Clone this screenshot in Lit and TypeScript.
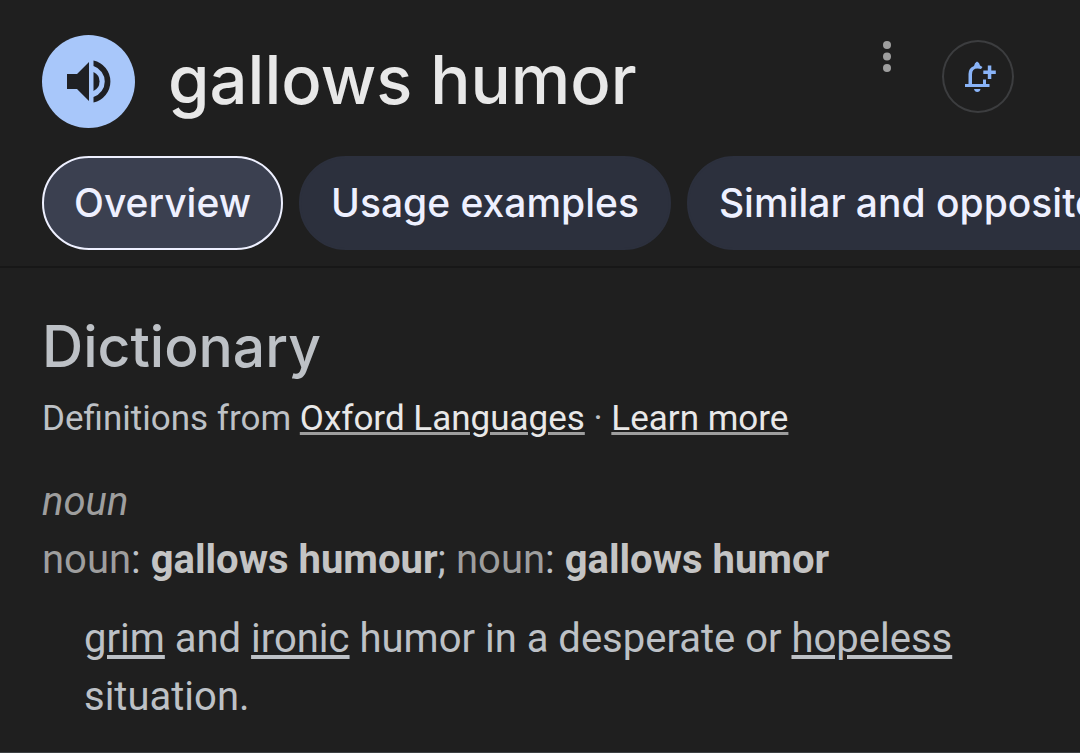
import { LitElement, html, css } from "lit";
import { customElement, state } from "lit/decorators.js";

@customElement("app-root")
export class AppRoot extends LitElement {
  static styles = css`
    :host {
      display: block;
      min-height: 100vh;
      box-sizing: border-box;
      overflow: hidden;
      background: #1f1f1f;
      color: #bdc1c6;
      font-family: Roboto, sans-serif;
      border-bottom: 1px solid #3c4043;
    }
    h1, h2, p { margin: 0; font-weight: 400; }
    button { margin: 0; padding: 0; border: 0; background: none; font: inherit; color: inherit; cursor: pointer; }
    svg { display: block; }
    header {
      display: flex;
      align-items: flex-start;
      padding: 35px 66px 0 42px;
    }
    .listen {
      flex: none;
      width: 93px;
      height: 93px;
      border-radius: 50%;
      background: #a8c7fa;
    }
    .word {
      flex: 1;
      margin-left: 33px;
      font: 500 67px/90px Inter, sans-serif;
      color: #e8e8e8;
      white-space: nowrap;
    }
    .more { flex: none; width: 12px; margin: 4px 49px 0 0; }
    .alert {
      flex: none;
      width: 72px;
      height: 73px;
      margin-top: 5px;
      border: 2px solid #3c3d3f;
      border-radius: 50%;
      display: flex;
      align-items: center;
      justify-content: center;
    }
    .chips {
      display: flex;
      gap: 16px;
      padding: 28px 0 16px 42px;
      overflow: hidden;
      border-bottom: 2px solid #171717;
    }
    .chip {
      flex: none;
      height: 94px;
      padding: 0 30px;
      border: 2px solid #2c303d;
      border-radius: 47px;
      background: #2c303d;
      color: #eef0ff;
      font: 500 39px/90px Inter, sans-serif;
      white-space: nowrap;
    }
    .chip.on { background: #3b4050; border-color: #eef0ff; }
    main { padding: 46px 42px 24px; }
    h2 { font: 500 57px/66px Inter, sans-serif; color: #bdc1c6; }
    .source { margin-top: 17px; font-size: 35px; line-height: 44px; }
    a { color: inherit; text-decoration: underline; text-decoration-thickness: 4px; text-underline-offset: 3px; }
    .source a { color: #e8e8e8; text-decoration-color: #9e9e9e; text-decoration-thickness: 3px; text-underline-offset: 2px; }
    .entry { margin-top: 32px; font-size: 40px; line-height: 58px; }
    .label { color: #9e9e9e; }
    b { color: #c4c4c4; font-weight: 700; }
    .sense { margin-top: 21px; padding-left: 42px; }
  `;

  @state() private selected = 0;

  private chips = ["Overview", "Usage examples", "Similar and opposite words"];

  render() {
    return html`
      <header>
        <button class="listen" aria-label="Listen">
          <svg width="93" height="93" viewBox="0 0 93 93" fill="#1f2023">
            <path d="M25 39h10l12-12v39L35 54H25z" />
            <path d="M51.500 37a10.500 10.500 0 0 1 0 19z" />
            <path d="M51.500 25.500a21.500 21.500 0 0 1 0 42v-5.500a16.300 16.300 0 0 0 0-31z" />
          </svg>
        </button>
        <h1 class="word">gallows humor</h1>
        <button class="more" aria-label="More options">
          <svg width="12" height="36" viewBox="0 0 12 36" fill="#9e9e9e">
            <circle cx="6" cy="6" r="4" /><circle cx="6" cy="17.500" r="4" /><circle cx="6" cy="29" r="4" />
          </svg>
        </button>
        <button class="alert" aria-label="Get notified">
          <svg width="36" height="34" viewBox="-1 0 36 34" fill="#8ab4f8">
            <path d="M4 24h3.500V14q0-6 5.500-8Q13.500 2.500 16 1.500q2.500 1 3 4l2.500 1.500-1.500 2Q11 7 11 14.500V24h11v-4.500h3V24h3.500v3H4z" />
            <path d="M13 29h6.500q-.5 3-3.200 3T13 29z" />
            <path d="M26.800 5.500h3.500v5h4.500v3.500h-4.500v5h-3.500v-5h-4.500v-3.500h4.500z" />
          </svg>
        </button>
      </header>
      <nav class="chips" aria-label="Sections">
        ${this.chips.map(
          (c, i) => html`<button
            class="chip ${i === this.selected ? "on" : ""}"
            aria-pressed=${i === this.selected}
            @click=${() => (this.selected = i)}
          >${c}</button>`
        )}
      </nav>
      <main>
        <h2>Dictionary</h2>
        <p class="source">Definitions from <a href="#oxford">Oxford Languages</a> · <a href="#learn">Learn more</a></p>
        <div class="entry">
          <p class="label"><i>noun</i></p>
          <p><span class="label">noun</span>: <b>gallows humour</b>; <span class="label">noun</span>: <b>gallows humor</b></p>
          <p class="sense"><a href="#grim">grim</a> and <a href="#ironic">ironic</a> humor in a desperate or <a href="#hopeless">hopeless</a> situation.</p>
        </div>
      </main>
    `;
  }
}
